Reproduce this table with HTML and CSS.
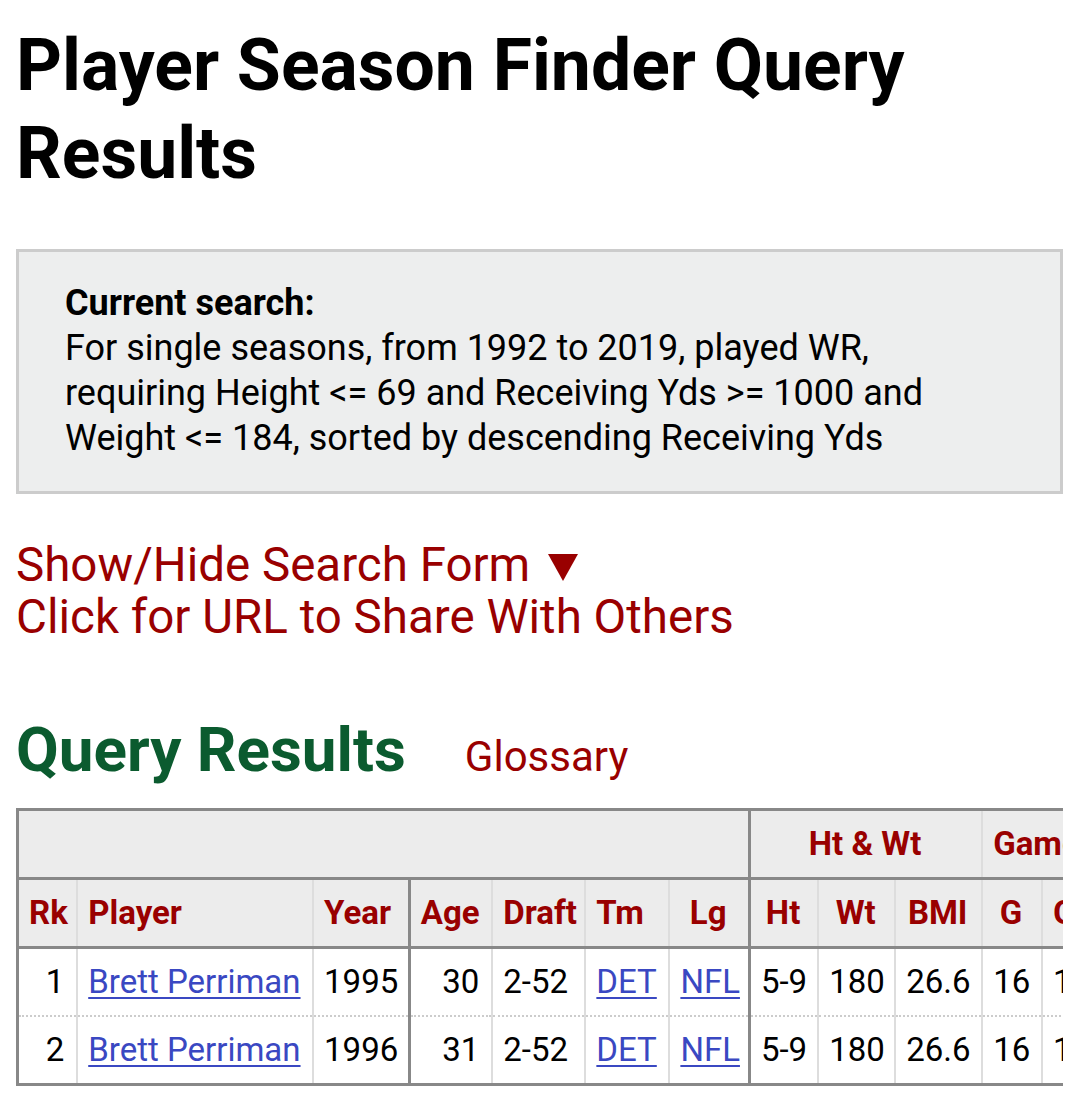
FILE: index.html
```html
<!DOCTYPE html>
<html lang="en">
<head>
<meta charset="utf-8">
<title>Player Season Finder Query Results</title>
<link rel="stylesheet" href="styles.css">
</head>
<body>
<div class="page">
  <h1 class="title">Player Season Finder Query Results</h1>

  <div class="search-box">
    <strong class="search-label">Current search:</strong><br>
    For single seasons, from 1992 to 2019, played WR,<br>
    requiring Height &lt;= 69 and Receiving Yds &gt;= 1000 and<br>
    Weight &lt;= 184, sorted by descending Receiving Yds
  </div>

  <div class="links">
    <a class="red-link" href="#">Show/Hide Search Form <svg class="tri" viewBox="0 0 30 27" width="30" height="27"><polygon points="0,0 30,0 15,27" fill="#990000"/></svg></a>
    <a class="red-link" href="#">Click for URL to Share With Others</a>
  </div>

  <div class="section-head">
    <h2 class="section-title">Query Results</h2>
    <a class="glossary" href="#">Glossary</a>
  </div>

  <div class="table-wrap">
    <table class="stats">
      <colgroup>
        <col class="c-rk"><col class="c-player"><col class="c-year"><col class="c-age"><col class="c-draft"><col class="c-tm"><col class="c-lg"><col class="c-ht"><col class="c-wt"><col class="c-bmi"><col class="c-g"><col class="c-gs"><col class="c-more"><col class="c-more"><col class="c-more">
      </colgroup>
      <thead>
        <tr class="over">
          <th colspan="7" class="blank thick-r"></th>
          <th colspan="3">Ht &amp; Wt</th>
          <th colspan="2">Games</th>
          <th colspan="3">Receiving</th>
        </tr>
        <tr class="head">
          <th>Rk</th>
          <th class="left">Player</th>
          <th class="left thick-r">Year</th>
          <th>Age</th>
          <th>Draft</th>
          <th class="left">Tm</th>
          <th class="thick-r">Lg</th>
          <th>Ht</th>
          <th>Wt</th>
          <th>BMI</th>
          <th>G</th>
          <th>GS</th>
          <th>Tgt</th>
          <th>Rec</th>
          <th>Yds</th>
        </tr>
      </thead>
      <tbody>
        <tr>
          <td class="num">1</td>
          <td class="left"><a class="blue" href="#">Brett Perriman</a></td>
          <td class="left thick-r">1995</td>
          <td class="num">30</td>
          <td class="left">2-52</td>
          <td class="left"><a class="blue" href="#">DET</a></td>
          <td class="left thick-r"><a class="blue" href="#">NFL</a></td>
          <td class="num">5-9</td>
          <td class="num">180</td>
          <td class="num">26.6</td>
          <td class="num">16</td>
          <td class="num">16</td>
          <td class="num"></td>
          <td class="num">108</td>
          <td class="num">1488</td>
        </tr>
        <tr>
          <td class="num">2</td>
          <td class="left"><a class="blue" href="#">Brett Perriman</a></td>
          <td class="left thick-r">1996</td>
          <td class="num">31</td>
          <td class="left">2-52</td>
          <td class="left"><a class="blue" href="#">DET</a></td>
          <td class="left thick-r"><a class="blue" href="#">NFL</a></td>
          <td class="num">5-9</td>
          <td class="num">180</td>
          <td class="num">26.6</td>
          <td class="num">16</td>
          <td class="num">16</td>
          <td class="num"></td>
          <td class="num">94</td>
          <td class="num">1021</td>
        </tr>
      </tbody>
    </table>
  </div>
</div>
</body>
</html>
```

FILE: styles.css
```css
html, body {
  margin: 0;
  padding: 0;
  background: #ffffff;
}

body {
  font-family: Roboto, "Liberation Sans", Arial, sans-serif;
  color: #000000;
}

.page {
  padding: 0 17px 0 16px;
}

.title {
  margin: 22px 0 0 0;
  font-size: 71.5px;
  line-height: 88px;
  font-weight: 700;
  color: #000000;
}

.search-box {
  margin-top: 51px;
  border: 3px solid #cccccc;
  background: #edeeee;
  padding: 29px 20px 30px 46px;
  font-size: 36px;
  line-height: 45px;
  color: #000000;
}

.search-label {
  font-weight: 700;
}

.links {
  margin-top: 45px;
  display: flex;
  flex-direction: column;
}

.red-link {
  color: #990000;
  text-decoration: none;
  font-size: 47.5px;
  line-height: 52px;
}

.tri {
  vertical-align: baseline;
  margin-left: 6px;
}

.section-head {
  margin-top: 72px;
  display: flex;
  align-items: baseline;
  gap: 59px;
}

.section-title {
  margin: 0;
  font-size: 62px;
  line-height: 70px;
  font-weight: 700;
  color: #0b5b2f;
}

.glossary {
  color: #990000;
  text-decoration: none;
  font-size: 42px;
}

.table-wrap {
  margin-top: 23px;
  width: 1047px;
  overflow: hidden;
}

.stats {
  border-collapse: collapse;
  table-layout: fixed;
  width: 1391px;
  border: 3px solid #888888;
  font-size: 33px;
  line-height: 40px;
}

.c-rk { width: 59px; }
.c-player { width: 233px; }
.c-year { width: 95px; }
.c-age { width: 82px; }
.c-draft { width: 92px; }
.c-tm { width: 83px; }
.c-lg { width: 79px; }
.c-ht { width: 68px; }
.c-wt { width: 76px; }
.c-bmi { width: 86px; }
.c-g { width: 59px; }
.c-gs { width: 59px; }
.c-more { width: 100px; }

.stats th,
.stats td {
  height: 66px;
  padding: 0 12px 0 10px;
  white-space: nowrap;
  vertical-align: middle;
  border-left: 2px solid #dddddd;
  border-right: 2px solid #dddddd;
}

.stats th {
  background: #ececec;
  color: #990000;
  font-weight: 700;
  text-align: center;
}

.stats .over th {
  border-bottom: 3px solid #888888;
}

.stats .head th {
  border-bottom: 3px solid #888888;
}

.stats td {
  background: #ffffff;
  color: #000000;
}

.stats tbody tr + tr td {
  border-top: 2px dotted #cccccc;
}

.stats .left {
  text-align: left;
}

.stats .num {
  text-align: right;
}

.stats .thick-r {
  border-right: 3px solid #888888;
}

.stats .blank {
  border-left: 3px solid #888888;
}

.blue {
  color: #3a48c2;
  text-decoration: underline;
  text-underline-offset: 4px;
  text-decoration-thickness: 2px;
}
```
